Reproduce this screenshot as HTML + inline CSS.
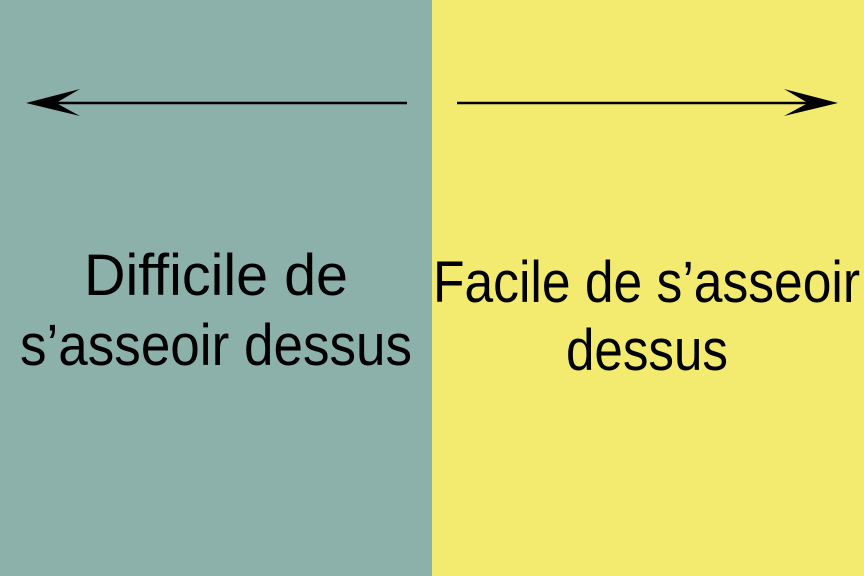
<!DOCTYPE html>
<html><head><meta charset="utf-8"><style>html,body{margin:0;padding:0}svg{display:block}</style></head>
<body>
<svg width="864" height="576" viewBox="0 0 864 576" xmlns="http://www.w3.org/2000/svg">
<rect x="0" y="0" width="432" height="576" fill="#8cb0aa"/>
<rect x="432" y="0" width="432" height="576" fill="#f3ea70"/>
<line x1="50" y1="103" x2="407" y2="103" stroke="#000" stroke-width="2.5"/>
<path d="M26 103 L80 89 L56 103 L80 116 Z" fill="#000"/>
<line x1="457" y1="103" x2="815" y2="103" stroke="#000" stroke-width="2.5"/>
<path d="M838 103 L784 89 L808 103 L784 116 Z" fill="#000"/>
<g font-family="Liberation Sans, sans-serif" font-size="58" fill="#000">
<text x="84" y="295" textLength="264" lengthAdjust="spacingAndGlyphs">Difficile de</text>
<text x="20" y="365" textLength="392" lengthAdjust="spacingAndGlyphs">s’asseoir dessus</text>
<text x="433" y="302" textLength="427" lengthAdjust="spacingAndGlyphs">Facile de s’asseoir</text>
<text x="566" y="370" textLength="162" lengthAdjust="spacingAndGlyphs">dessus</text>
</g>
</svg>
</body></html>
